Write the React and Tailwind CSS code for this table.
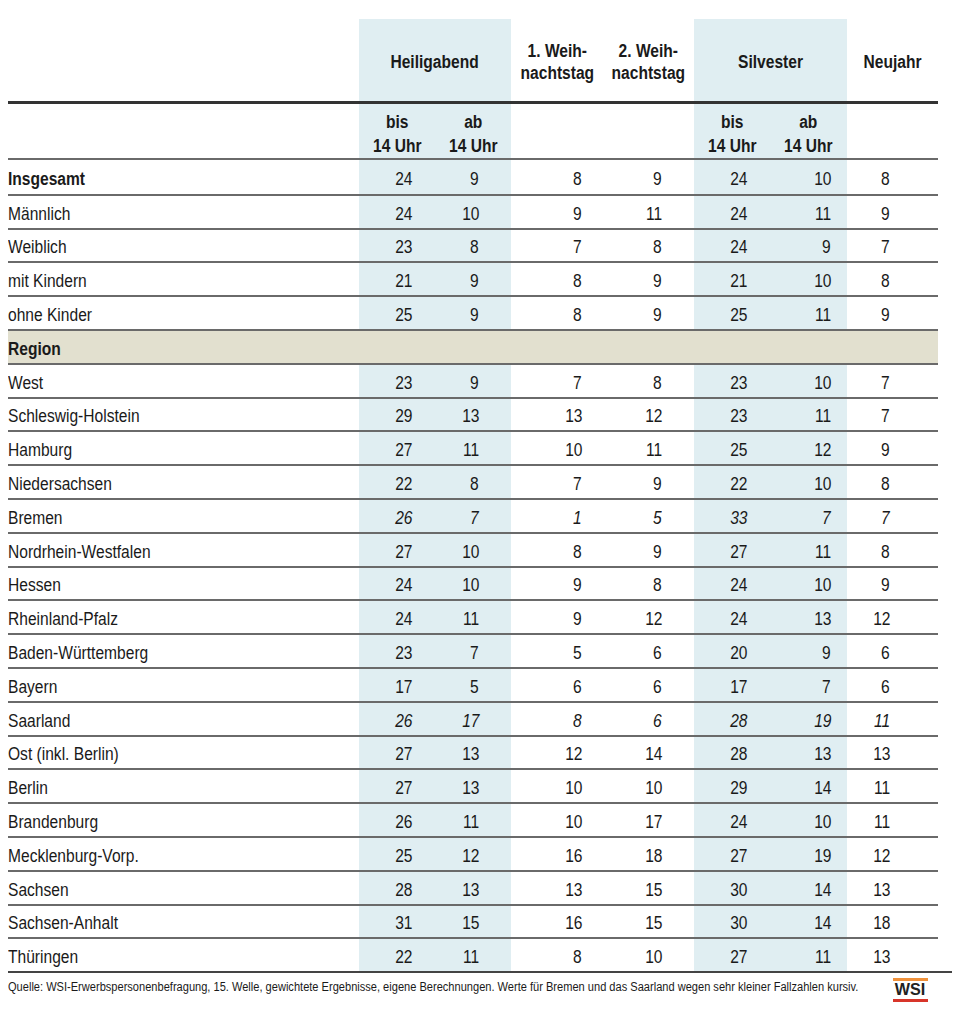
import React from "react";

const FONT = { fontFamily: '"Liberation Sans", Arial, sans-serif' };

const rows = [
  { l: "Insgesamt", v: [24, 9, 8, 9, 24, 10, 8], b: true },
  { l: "Männlich", v: [24, 10, 9, 11, 24, 11, 9] },
  { l: "Weiblich", v: [23, 8, 7, 8, 24, 9, 7] },
  { l: "mit Kindern", v: [21, 9, 8, 9, 21, 10, 8] },
  { l: "ohne Kinder", v: [25, 9, 8, 9, 25, 11, 9] },
  { l: "Region", region: true },
  { l: "West", v: [23, 9, 7, 8, 23, 10, 7] },
  { l: "Schleswig-Holstein", v: [29, 13, 13, 12, 23, 11, 7] },
  { l: "Hamburg", v: [27, 11, 10, 11, 25, 12, 9] },
  { l: "Niedersachsen", v: [22, 8, 7, 9, 22, 10, 8] },
  { l: "Bremen", v: [26, 7, 1, 5, 33, 7, 7], i: true },
  { l: "Nordrhein-Westfalen", v: [27, 10, 8, 9, 27, 11, 8] },
  { l: "Hessen", v: [24, 10, 9, 8, 24, 10, 9] },
  { l: "Rheinland-Pfalz", v: [24, 11, 9, 12, 24, 13, 12] },
  { l: "Baden-Württemberg", v: [23, 7, 5, 6, 20, 9, 6] },
  { l: "Bayern", v: [17, 5, 6, 6, 17, 7, 6] },
  { l: "Saarland", v: [26, 17, 8, 6, 28, 19, 11], i: true },
  { l: "Ost (inkl. Berlin)", v: [27, 13, 12, 14, 28, 13, 13] },
  { l: "Berlin", v: [27, 13, 10, 10, 29, 14, 11] },
  { l: "Brandenburg", v: [26, 11, 10, 17, 24, 10, 11] },
  { l: "Mecklenburg-Vorp.", v: [25, 12, 16, 18, 27, 19, 12] },
  { l: "Sachsen", v: [28, 13, 13, 15, 30, 14, 13] },
  { l: "Sachsen-Anhalt", v: [31, 15, 16, 15, 30, 14, 18] },
  { l: "Thüringen", v: [22, 11, 8, 10, 27, 11, 13] },
];

const cellCls = [
  "bg-[#e0eef2] pr-[23px]",
  "bg-[#e0eef2] pr-[32px]",
  "pr-[21px]",
  "pr-[32px]",
  "bg-[#e0eef2] pr-[23px]",
  "bg-[#e0eef2] pr-[16px]",
  "pr-[48px]",
];

const GRID = "grid grid-cols-[351px_76px_76px_92px_91px_76px_77px_91px] w-[930px]";
const BLUE = "bg-[#e0eef2]";
const NL = "inline-block whitespace-nowrap scale-x-[0.89] origin-left";
const NR = "inline-block whitespace-nowrap scale-x-[0.89] origin-right";
const NC = "inline-block whitespace-nowrap scale-x-[0.89] origin-center text-center";

function Sub({ a }) {
  return (
    <div className={`${BLUE} flex items-center justify-center pt-[5px]`}>
      <span className={NC}>
        {a}
        <br />
        14 Uhr
      </span>
    </div>
  );
}

export default function App() {
  return (
    <div className="bg-white min-h-[1024px] pt-[19px] pl-[8px] text-[#1a1a1a]" style={FONT}>
      {/* header row */}
      <div className={`${GRID} h-[85px] border-b-[3px] border-[#333] font-bold text-[17.5px] leading-[22px]`}>
        <div />
        <div className={`col-span-2 ${BLUE} flex items-center justify-center pt-[3px]`}>
          <span className={NC}>Heiligabend</span>
        </div>
        <div className="flex items-center justify-center pt-[3px]">
          <span className={NC}>1. Weih-<br />nachtstag</span>
        </div>
        <div className="flex items-center justify-center pt-[3px]">
          <span className={NC}>2. Weih-<br />nachtstag</span>
        </div>
        <div className={`col-span-2 ${BLUE} flex items-center justify-center pt-[3px]`}>
          <span className={NC}>Silvester</span>
        </div>
        <div className="flex items-center justify-center pt-[3px]">
          <span className={NC}>Neujahr</span>
        </div>
      </div>
      {/* sub header */}
      <div className={`${GRID} h-[56px] border-b-2 border-[#6a6a6a] font-bold text-[17.5px] leading-[24px]`}>
        <div />
        <Sub a="bis" />
        <Sub a="ab" />
        <div />
        <div />
        <Sub a="bis" />
        <Sub a="ab" />
        <div />
      </div>
      {/* body */}
      {rows.map((r, idx) => (
        <div
          key={r.l}
          className={`${GRID} h-[33.8px] text-[17.5px] ${idx > 0 ? "border-t-2 border-[#6a6a6a]" : ""} ${r.region ? "bg-[#e2e0cf]" : ""}`}
        >
          <div className={`flex items-center pt-[4px] ${r.b || r.region ? "font-bold" : ""}`}>
            <span className={NL}>{r.l}</span>
          </div>
          {r.region
            ? [0, 1, 2, 3, 4, 5, 6].map((k) => <div key={k} />)
            : r.v.map((n, k) => (
                <div key={k} className={`flex items-center justify-end pt-[4px] ${cellCls[k]} ${r.i ? "italic" : ""}`}>
                  <span className={NR}>{n}</span>
                </div>
              ))}
        </div>
      ))}
      {/* footer */}
      <div className="w-[944px] border-t-2 border-[#444] flex justify-between items-start">
        <div className="w-[860px] text-[12.45px] leading-[16px] pt-[6px]">
          <span className={NL}>
            Quelle: WSI-Erwerbspersonenbefragung, 15. Welle, gewichtete Ergebnisse, eigene Berechnungen. Werte für Bremen und das Saarland wegen sehr kleiner Fallzahlen kursiv.
          </span>
        </div>
        <div className="mr-[24px] mt-[5px] w-[35px] flex flex-col items-stretch">
          <div className="h-[3px] bg-[#f0913a]" />
          <div className="text-center font-bold text-[17px] leading-[18px] text-[#222]">
            <span className="inline-block scale-x-[0.95]">WSI</span>
          </div>
          <div className="h-[3px] bg-[#d8352a]" />
        </div>
      </div>
    </div>
  );
}
